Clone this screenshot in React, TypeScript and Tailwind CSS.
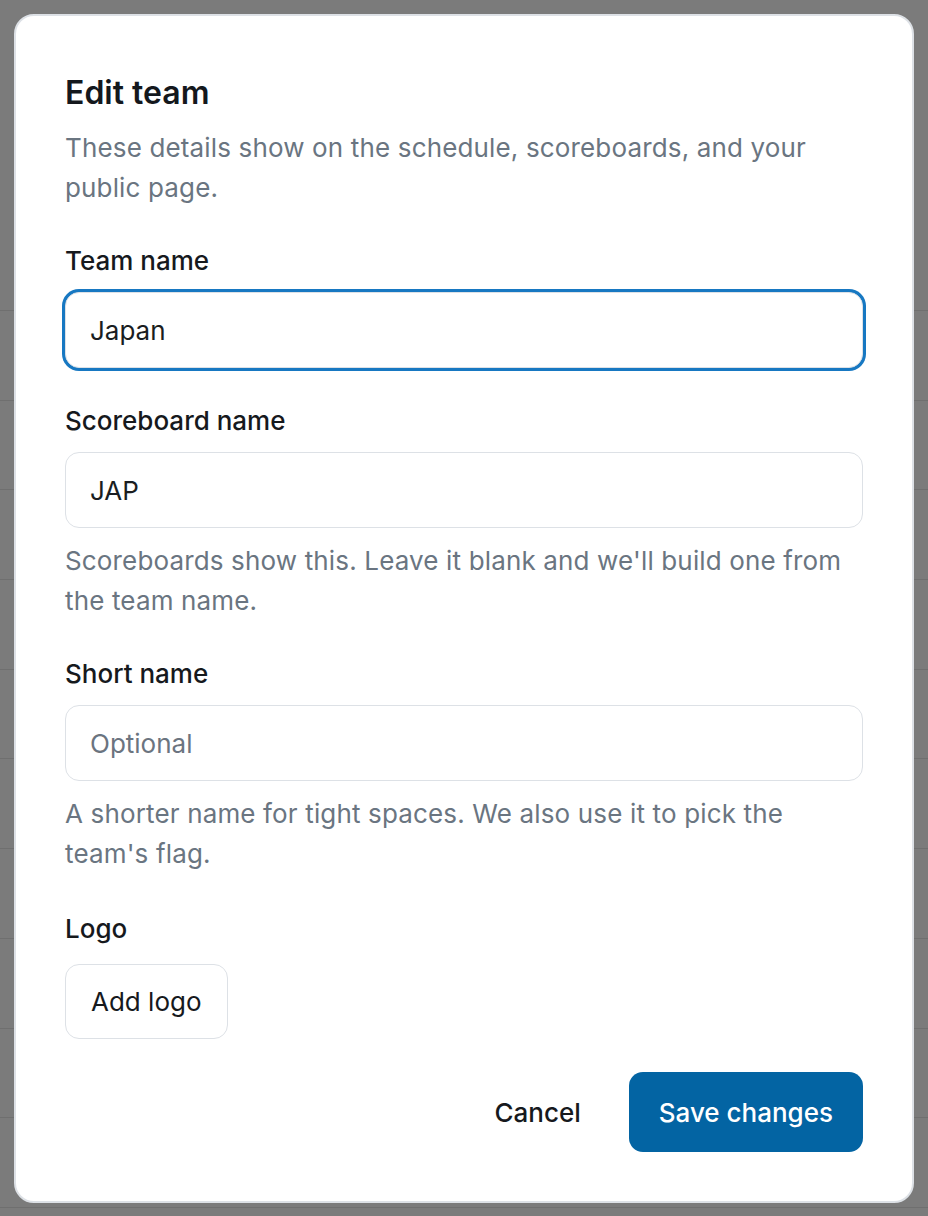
import React from "react";

const rows = Array.from({ length: 10 });

function Field({
  label,
  value,
  placeholder,
  focused,
  help,
}: {
  label: string;
  value?: string;
  placeholder?: string;
  focused?: boolean;
  help?: string;
}) {
  return (
    <div className="flex flex-col">
      <label className="text-[26px] leading-[36px] font-medium text-[#16191d]">{label}</label>
      <input
        readOnly
        defaultValue={value}
        placeholder={placeholder}
        className={
          "mt-[13px] h-[76px] w-full rounded-[14px] border border-[#dde1e6] bg-white px-[24px] text-[26px] text-[#1a1d21] outline-none placeholder:text-[#6b7480] " +
          (focused ? "shadow-[0_0_0_3px_#1778c2]" : "")
        }
      />
      {help && (
        <p className="mt-[13px] text-[26px] leading-[40px] tracking-[0.15px] text-[#6a7581]">{help}</p>
      )}
    </div>
  );
}

export default function App() {
  return (
    <div
      className="relative h-[1216px] w-[928px] overflow-hidden bg-[#7b7b7b]"
      style={{ fontFamily: "Inter, 'Liberation Sans', sans-serif" }}
    >
      <div className="h-[311px] border-b border-[#6f6f6f]" />
      {rows.map((_, i) => (
        <div key={i} className="h-[89.7px] border-b border-[#6f6f6f]" />
      ))}

      <div className="absolute left-[14px] top-[14px] w-[900px] rounded-[20px] border-2 border-[#dde1e6] bg-white px-[49px] pt-[57px] pb-[49px]">
        <h2 className="text-[32px] leading-[40px] font-semibold text-[#14181d]">Edit team</h2>
        <p className="mt-[15px] text-[26px] leading-[40px] tracking-[0.15px] text-[#6a7581]">
          These details show on the schedule, scoreboards, and your public page.
        </p>

        <div className="mt-[35px] flex flex-col gap-[35px]">
          <Field label="Team name" value="Japan" focused />
          <Field
            label="Scoreboard name"
            value="JAP"
            help="Scoreboards show this. Leave it blank and we'll build one from the team name."
          />
          <Field
            label="Short name"
            placeholder="Optional"
            help="A shorter name for tight spaces. We also use it to pick the team's flag."
          />
          <div className="mt-[2px] flex flex-col">
            <span className="text-[26px] leading-[36px] font-medium text-[#16191d]">Logo</span>
            <div className="mt-[17px]">
              <button className="h-[75px] rounded-[14px] border border-[#dde1e6] bg-white px-[25px] text-[26px] font-normal text-[#16191d]">
                Add logo
              </button>
            </div>
          </div>
        </div>

        <div className="mt-[33px] flex justify-end gap-[16px]">
          <button className="h-[80px] rounded-[14px] px-[32px] text-[26px] font-medium text-[#16191d]">
            Cancel
          </button>
          <button className="h-[80px] rounded-[14px] bg-[#0364a3] px-[30px] text-[26px] font-medium text-white">
            Save changes
          </button>
        </div>
      </div>
    </div>
  );
}
